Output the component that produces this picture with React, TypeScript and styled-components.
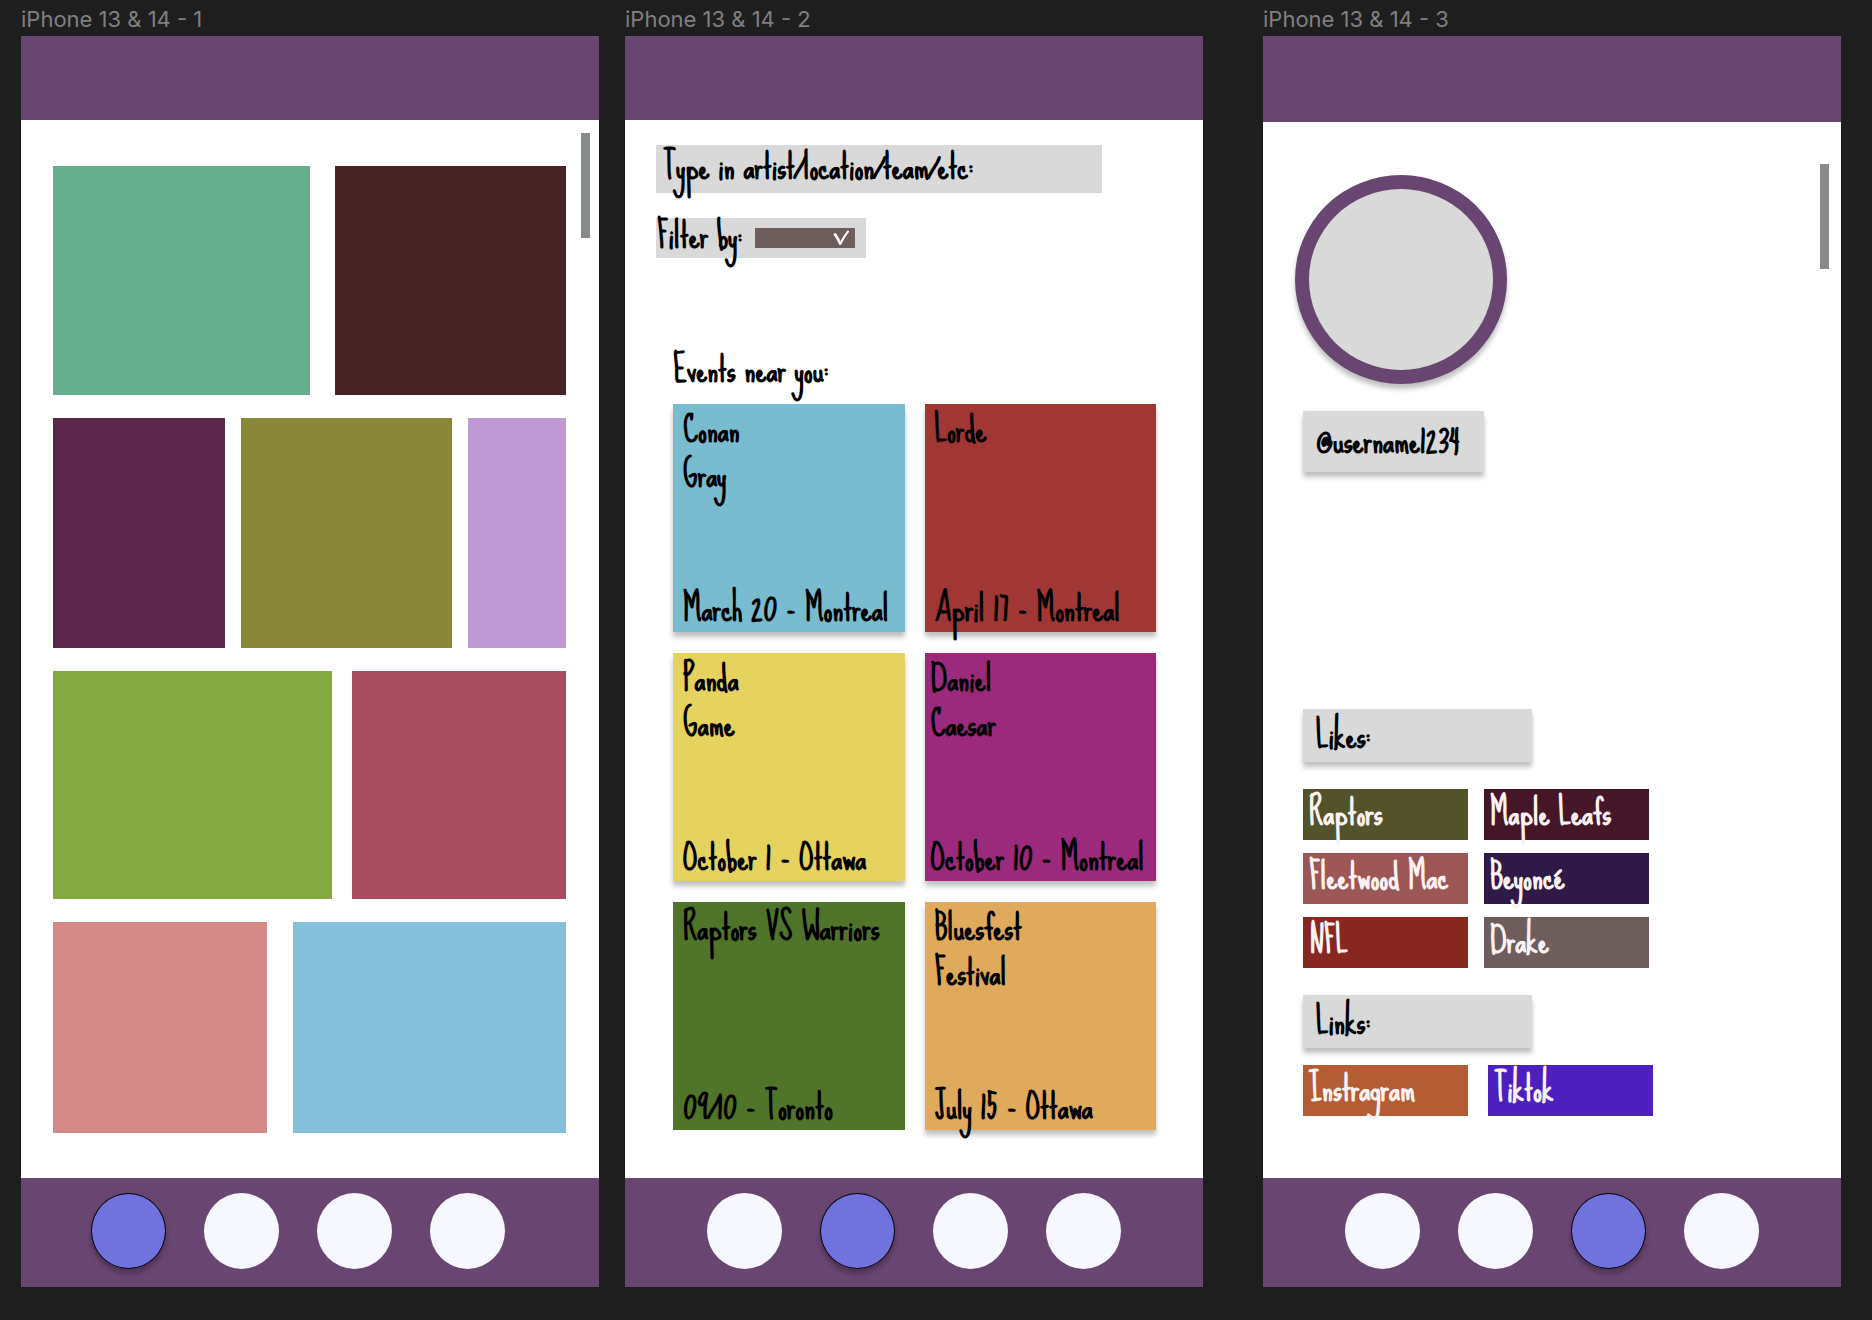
import React from "react";
import styled, { createGlobalStyle, css } from "styled-components";

const color = {
  canvas: "#1e1e1e",
  bar: "#694571",
  panel: "#d9d9d9",
  caption: "#808080",
  dot: "#f7f8ff",
  dotActive: "#7272df",
  thumb: "#868a8a",
  field: "#6d5d5c",
  chipText: "#faf2f1",
};

const hand = `"Just Another Hand", "Sue Ellen Francisco", "Liberation Sans Narrow", "Liberation Sans", sans-serif`;
const lift = "0 5px 5px rgba(0, 0, 0, 0.25)";

const GlobalStyle = createGlobalStyle`
  *, *::before, *::after { box-sizing: border-box; }
  body {
    margin: 0;
    background: ${color.canvas};
    font-family: ${hand};
    font-size: 35px;
    font-weight: 700;
    font-kerning: none;
    line-height: 45px;
    color: #000;
  }
  h2, h3, p, ul { margin: 0; padding: 0; font-weight: inherit; font-size: inherit; }
  button, input, select { font: inherit; color: inherit; border: 0; border-radius: 0; padding: 0; margin: 0; }
`;

const Board = styled.main`
  display: grid;
  grid-template-columns: 1fr 26px 1fr 60px 1fr;
  min-height: 100vh;
  padding: 0 31px 33px 21px;
`;

const Column = styled.section<{ $track: number }>`
  grid-column: ${(p) => p.$track};
  display: flex;
  flex-direction: column;
  min-width: 0;
`;

const Caption = styled.h2`
  height: 36px;
  font-family: Inter, sans-serif;
  font-size: 22px;
  font-weight: 400;
  line-height: 38px;
  white-space: nowrap;
  color: ${color.caption};
`;

const Screen = styled.div`
  position: relative;
  display: flex;
  flex: 1;
  flex-direction: column;
  background: #fff;
`;

const TopBar = styled.header<{ $height: number }>`
  height: ${(p) => p.$height}px;
  background: ${color.bar};
`;

const ScrollThumb = styled.div<{ $top: number; $right: number }>`
  position: absolute;
  top: ${(p) => p.$top}px;
  right: ${(p) => p.$right}px;
  width: 9px;
  height: 105px;
  background: ${color.thumb};
`;

const Nav = styled.nav<{ $start: number }>`
  display: flex;
  gap: 38px;
  height: 109px;
  padding: 15px 0 0 ${(p) => p.$start}px;
  background: ${color.bar};
`;

const NavDot = styled.button<{ $active: boolean }>`
  flex: none;
  width: 75px;
  height: 76px;
  border-radius: 50%;
  background: ${color.dot};
  cursor: pointer;
  ${(p) =>
    p.$active &&
    css`
      border: 1px solid #000;
      background: ${color.dotActive};
      box-shadow: ${lift};
    `}
`;

/* Mosaic screen */

const Mosaic = styled.div`
  display: flex;
  flex: 1;
  flex-direction: column;
  gap: 23px;
  padding: 46px 33px 0 32px;
`;

const MosaicRow = styled.div<{ $height: number; $gap: number; $columns: string }>`
  display: grid;
  grid-template-columns: ${(p) => p.$columns};
  gap: ${(p) => p.$gap}px;
  height: ${(p) => p.$height}px;
`;

const Tile = styled.div<{ $fill: string }>`
  background: ${(p) => p.$fill};
`;

/* Search screen */

const SearchBody = styled.div`
  flex: 1;
  padding: 25px 31px 0;
`;

const SearchForm = styled.form`
  display: flex;
  flex-direction: column;
  align-items: flex-start;
  gap: 25px;
`;

const Field = styled.div<{ $width: number; $height: number; $inset: number }>`
  display: flex;
  align-items: center;
  justify-content: space-between;
  width: ${(p) => p.$width}px;
  max-width: 100%;
  height: ${(p) => p.$height}px;
  padding: 0 11px 0 ${(p) => p.$inset}px;
  background: ${color.panel};
`;

const FieldLabel = styled.label`
  flex: none;
  padding-bottom: 6px;
`;

const SearchInput = styled.input`
  flex: 1;
  min-width: 0;
  height: 100%;
  margin-left: 8px;
  background: transparent;
`;

const SelectWrap = styled.div`
  position: relative;
  display: flex;
`;

const FilterSelect = styled.select`
  width: 100px;
  height: 20px;
  appearance: none;
  background: ${color.field};
  color: #fff;
  font-size: 16px;
`;

const Check = styled.svg`
  position: absolute;
  top: 2px;
  right: 5px;
  width: 17px;
  height: 16px;
  pointer-events: none;
`;

const Events = styled.section`
  padding: 89px 16px 0 17px;
`;

const EventGrid = styled.div`
  display: grid;
  grid-template-columns: 1fr 1fr;
  gap: 21px 20px;
  padding-top: 12px;
`;

const EventCard = styled.article<{ $fill: string; $inset: number; $flat?: boolean }>`
  display: flex;
  flex-direction: column;
  justify-content: space-between;
  height: 228px;
  padding: 3px 0 1px ${(p) => p.$inset}px;
  background: ${(p) => p.$fill};
  box-shadow: ${(p) => (p.$flat ? "none" : lift)};
  white-space: pre;
`;

/* Profile screen */

const ProfileBody = styled.div`
  flex: 1;
  padding: 53px 32px 0;
`;

const Avatar = styled.div`
  width: 212px;
  height: 209px;
  border: 14px solid ${color.bar};
  border-radius: 50%;
  background: ${color.panel};
  box-shadow: ${lift};
`;

const Details = styled.div`
  padding: 27px 0 0 8px;
`;

const Handle = styled.p`
  width: 181px;
  height: 61px;
  padding: 0 13px;
  background: ${color.panel};
  box-shadow: ${lift};
  line-height: 60px;
`;

const Group = styled.section<{ $space: number }>`
  padding-top: ${(p) => p.$space}px;
`;

const GroupTitle = styled.h3`
  width: 229px;
  height: 53px;
  padding: 0 13px;
  background: ${color.panel};
  box-shadow: ${lift};
  line-height: 53px;
`;

const ChipGrid = styled.ul<{ $space: number; $gap: number }>`
  display: grid;
  grid-template-columns: 165px 165px;
  gap: 13px ${(p) => p.$gap}px;
  padding-top: ${(p) => p.$space}px;
  list-style: none;
`;

const chip = css<{ $fill: string }>`
  display: block;
  height: 51px;
  padding: 0 6px;
  background: ${(p) => p.$fill};
  color: ${color.chipText};
  line-height: 48px;
  white-space: nowrap;
`;

const Chip = styled.li<{ $fill: string }>`
  ${chip}
`;

const LinkChip = styled.a<{ $fill: string }>`
  ${chip}
  text-decoration: none;
`;

const mosaic = [
  { height: 229, gap: 25, columns: "257fr 231fr", fills: ["#66ae8e", "#452423"] },
  { height: 230, gap: 16, columns: "172fr 211fr 98fr", fills: ["#5a264a", "#888838", "#be99d4"] },
  { height: 228, gap: 20, columns: "279fr 214fr", fills: ["#84a940", "#a74c61"] },
  { height: 211, gap: 26, columns: "214fr 273fr", fills: ["#d68a88", "#84c0da"] },
];

const events = [
  { name: "Conan\nGray", date: "March 20 - Montreal", fill: "#79bccf", inset: 10 },
  { name: "Lorde", date: "April 17 - Montreal", fill: "#a03734", inset: 10 },
  { name: "Panda\nGame", date: "October 1 - Ottawa", fill: "#e6d25e", inset: 10 },
  { name: "Daniel\nCaesar", date: "October 10 - Montreal", fill: "#9b2a7c", inset: 6 },
  { name: "Raptors VS Warriors", date: "09/10 - Toronto", fill: "#50742a", inset: 10, flat: true },
  { name: "Bluesfest\nFestival", date: "July 15 - Ottawa", fill: "#dfaa5b", inset: 10 },
];

const likes = [
  { name: "Raptors", fill: "#52522b" },
  { name: "Maple Leafs", fill: "#451628" },
  { name: "Fleetwood Mac", fill: "#9c5656" },
  { name: "Beyoncé", fill: "#2f1946" },
  { name: "NFL", fill: "#882620" },
  { name: "Drake", fill: "#6d5e5d" },
];

const links = [
  { name: "Instragram", fill: "#b45c34" },
  { name: "Tiktok", fill: "#4d1fbf" },
];

const tabs = ["Gallery", "Search", "Profile", "More"];

function TabBar({ active, start }: { active: number; start: number }) {
  return (
    <Nav $start={start}>
      {tabs.map((tab, i) => (
        <NavDot key={tab} type="button" aria-label={tab} $active={i === active} />
      ))}
    </Nav>
  );
}

function GalleryScreen() {
  return (
    <Column $track={1}>
      <Caption>iPhone 13 &amp; 14 - 1</Caption>
      <Screen>
        <TopBar $height={84} />
        <Mosaic>
          {mosaic.map((row) => (
            <MosaicRow key={row.columns} $height={row.height} $gap={row.gap} $columns={row.columns}>
              {row.fills.map((fill) => (
                <Tile key={fill} $fill={fill} />
              ))}
            </MosaicRow>
          ))}
        </Mosaic>
        <ScrollThumb $top={97} $right={9} />
        <TabBar active={0} start={70} />
      </Screen>
    </Column>
  );
}

function SearchScreen() {
  return (
    <Column $track={3}>
      <Caption>iPhone 13 &amp; 14 - 2</Caption>
      <Screen>
        <TopBar $height={84} />
        <SearchBody>
          <SearchForm>
            <Field $width={446} $height={48} $inset={7}>
              <FieldLabel htmlFor="query">Type in artist/location/team/etc:</FieldLabel>
              <SearchInput id="query" type="text" />
            </Field>
            <Field $width={210} $height={40} $inset={1}>
              <FieldLabel htmlFor="filter">Filter by:</FieldLabel>
              <SelectWrap>
                <FilterSelect id="filter" defaultValue="">
                  <option value="" />
                </FilterSelect>
                <Check viewBox="0 0 17 16" fill="none" stroke="#fff" strokeLinecap="round" aria-hidden="true">
                  <path d="M2 4.5 C3.6 6 5 9.5 7.2 13.6" strokeWidth="2.8" />
                  <path d="M7.4 13.6 C9.4 9.6 11.6 5.6 15 1.6" strokeWidth="2.2" />
                </Check>
              </SelectWrap>
            </Field>
          </SearchForm>
          <Events>
            <h3>Events near you:</h3>
            <EventGrid>
              {events.map((e) => (
                <EventCard key={e.name} $fill={e.fill} $inset={e.inset} $flat={e.flat}>
                  <p>{e.name}</p>
                  <p>{e.date}</p>
                </EventCard>
              ))}
            </EventGrid>
          </Events>
        </SearchBody>
        <TabBar active={1} start={82} />
      </Screen>
    </Column>
  );
}

function ProfileScreen() {
  return (
    <Column $track={5}>
      <Caption>iPhone 13 &amp; 14 - 3</Caption>
      <Screen>
        <TopBar $height={86} />
        <ProfileBody>
          <Avatar />
          <Details>
            <Handle>@username1234</Handle>
            <Group $space={237}>
              <GroupTitle>Likes:</GroupTitle>
              <ChipGrid $space={27} $gap={16}>
                {likes.map((l) => (
                  <Chip key={l.name} $fill={l.fill}>
                    {l.name}
                  </Chip>
                ))}
              </ChipGrid>
            </Group>
            <Group $space={27}>
              <GroupTitle>Links:</GroupTitle>
              <ChipGrid $space={17} $gap={20}>
                {links.map((l) => (
                  <li key={l.name}>
                    <LinkChip href="#" $fill={l.fill}>
                      {l.name}
                    </LinkChip>
                  </li>
                ))}
              </ChipGrid>
            </Group>
          </Details>
        </ProfileBody>
        <ScrollThumb $top={128} $right={12} />
        <TabBar active={2} start={82} />
      </Screen>
    </Column>
  );
}

export default function App() {
  return (
    <>
      <GlobalStyle />
      <Board>
        <GalleryScreen />
        <SearchScreen />
        <ProfileScreen />
      </Board>
    </>
  );
}
